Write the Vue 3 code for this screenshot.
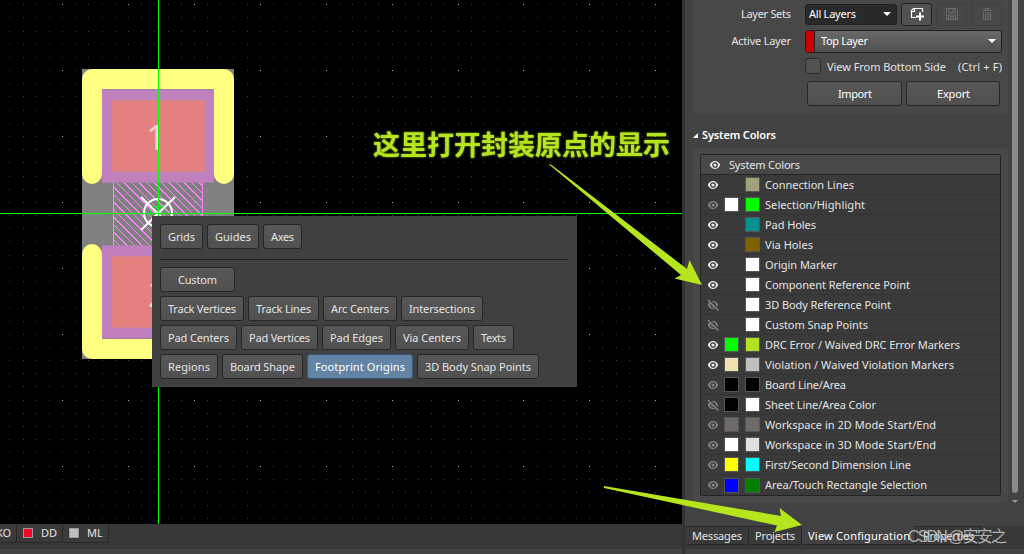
<script setup>
const STEP = 13.18
let dim = ''
let bright = ''
for (let i = -4; i < 48; i++) {
  for (let j = -5; j < 35; j++) {
    const x = Math.round(62.1 + i * STEP)
    const y = Math.round(70.1 + j * STEP)
    const d = `M${x} ${y}h1v1h-1z`
    if (i % 5 === 0 && j % 5 === 0) bright += d
    else dim += d
  }
}

const snapRows = [
  [['Custom', 75]],
  [['Track Vertices', 84], ['Track Lines', 71], ['Arc Centers', 74], ['Intersections', 82]],
  [['Pad Centers', 77], ['Pad Vertices', 77], ['Pad Edges', 69], ['Via Centers', 74], ['Texts', 41]],
  [['Regions', 58], ['Board Shape', 81], ['Footprint Origins', 106, true], ['3D Body Snap Points', 122]]
]
const scopes = [['Grids', 43], ['Guides', 52], ['Axes', 39]]

const rows = [
  ['on', '', '#a2a27a', 'Connection Lines', 89],
  ['dim', '#ffffff', '#00ff00', 'Selection/Highlight', 100],
  ['on', '', '#009090', 'Pad Holes', 51],
  ['on', '', '#806000', 'Via Holes', 48],
  ['on', '', '#ffffff', 'Origin Marker', 72],
  ['on', '', '#ffffff', 'Component Reference Point', 145],
  ['off', '', '#ffffff', '3D Body Reference Point', 126],
  ['off', '', '#ffffff', 'Custom Snap Points', 103],
  ['on', '#00ff00', '#b3e11f', 'DRC Error / Waived DRC Error Markers', 195],
  ['on', '#f0dfb0', '#c0c0c0', 'Violation / Waived Violation Markers', 189],
  ['dim', '#000000', '#000000', 'Board Line/Area', 81],
  ['off', '#000000', '#ffffff', 'Sheet Line/Area Color', 111],
  ['dim', '#6e6a6a', '#6e6a6a', 'Workspace in 2D Mode Start/End', 171],
  ['dim', '#ffffff', '#dfdfdf', 'Workspace in 3D Mode Start/End', 171],
  ['dim', '#ffff00', '#00ffff', 'First/Second Dimension Line', 146],
  ['dim', '#0000ff', '#008000', 'Area/Touch Rectangle Selection', 162]
]
const tabs = [['Messages', 63, 50], ['Projects', 53, 40], ['View Configuration', 114, 102], ['Properties', 65, 51]]
</script>

<template>
  <div class="app">
    <main class="left">
      <svg class="canvas" width="682" height="524">
        <defs>
          <clipPath id="body"><rect x="113" y="182" width="90" height="64" /></clipPath>
        </defs>
        <rect width="682" height="524" fill="#000" />
        <rect x="82" y="69" width="152" height="290" fill="#808080" />
        <path :d="dim" fill="#b0b0b0" fill-opacity=".36" shape-rendering="crispEdges" />
        <path :d="bright" fill="#b5b5b5" shape-rendering="crispEdges" />
        <g clip-path="url(#body)" stroke="#ff80ff" stroke-width="1" shape-rendering="crispEdges">
          <path v-for="n in 24" :key="n" :d="`M${26 + n * 7.5} 182l64 64`" />
        </g>
        <path d="M113.5 182V246M202.5 182V246" stroke="#ff80ff" />
        <g v-for="p in [0, 1]" :key="p" :transform="p ? 'translate(0 428) scale(1 -1)' : ''">
          <path d="M92 174V79H224V174" fill="none" stroke="#ffff80" stroke-width="20" stroke-linecap="round" stroke-linejoin="round" />
          <rect x="102" y="89.500" width="112" height="93" fill="#c07fbd" />
          <rect x="111.500" y="100.500" width="93" height="71" fill="#e58080" stroke="#cf868d" />
        </g>
        <text class="pin" x="156" y="149.500">1</text>
        <text class="pin" x="158" y="307">2</text>
        <g fill="none" stroke="#fff" stroke-width="2">
          <circle cx="158" cy="213" r="14" />
          <path d="M141 197l34 33M175 197l-34 33" />
        </g>
        <g fill="none" stroke="#0f0">
          <path d="M158.500 0V524M0 213.500H682M154 206.500h9" />
          <circle cx="158" cy="213" r="7.500" stroke-dasharray="5 2" />
        </g>
      </svg>
      <footer class="layers">
        <div class="layer first">KO</div>
        <div class="layer"><i class="red"></i>DD</div>
        <div class="layer"><i class="silver"></i>ML</div>
      </footer>
    </main>

    <aside class="side">
      <div class="scroll">
        <section class="card top">
          <div class="row r1">
            <label><svg width="80" height="18"><text x="30" y="13" textLength="50">Layer Sets</text></svg></label>
            <div class="combo dark"><svg width="60" height="18"><text x="0" y="13" textLength="47">All Layers</text></svg><b class="caret"></b></div>
            <button class="ico">
              <svg width="16" height="16" viewBox="0 0 16 16" fill="none" stroke="#fff"><path d="M7 11.500H2.500V4.500L4.500 2.500H13.500V6M2 5.500H5.500V2.500" stroke-width="1.200" /><path d="M11 6.500V14.500M7 10.500H15" stroke-width="2" /></svg>
            </button>
            <button class="ico off">
              <svg width="14" height="14" viewBox="0 0 14 14" fill="none" stroke="#6c6c6c"><path d="M1.500 1.500H11L12.500 3V12.500H1.500ZM4 1.500V5.500H10V1.500M8 2V4.500M3.500 12.500V8H10.500V12.500M5 9.500H9M5 11H9" /></svg>
            </button>
            <button class="ico off last">
              <svg width="12" height="14" viewBox="0 0 12 14" fill="none" stroke="#6c6c6c"><path d="M1.500 3.500H10.500M4.500 3V1.500H7.500V3" stroke-width="1.200" /><path d="M2.500 5V12.500H9.500V5M4.800 5V12M7.200 5V12" stroke-width="1.200" /></svg>
            </button>
          </div>
          <div class="row r2">
            <label><svg width="80" height="18"><text x="20.500" y="13" textLength="59.500">Active Layer</text></svg></label>
            <div class="combo wide"><i></i><svg width="60" height="18"><text x="0" y="13" textLength="47">Top Layer</text></svg><b class="caret"></b></div>
          </div>
          <div class="row r3">
            <i class="check"></i>
            <svg width="180" height="18"><text x="0" y="13" textLength="119">View From Bottom Side</text><text x="131" y="13" textLength="44">(Ctrl + F)</text></svg>
          </div>
          <div class="row r4">
            <button class="btn"><svg width="34" height="18"><text x="0" y="13" textLength="34">Import</text></svg></button>
            <button class="btn"><svg width="33" height="18"><text x="0" y="13" textLength="33">Export</text></svg></button>
          </div>
        </section>
        <h2><svg width="5" height="5"><path d="M5 0V5H0Z" fill="#fff" /></svg><svg width="80" height="18"><text x="0" y="13" textLength="74">System Colors</text></svg></h2>
        <section class="card colors">
          <div class="table">
            <div class="trow head">
              <svg class="eye" width="12" height="12"><path d="M.8 6C3 .6 9 .6 11.200 6C9 11.400 3 11.400 .8 6Z" class="shape" /><circle cx="6" cy="6" r="2.200" class="ring" /></svg>
              <svg class="label" width="80" height="18"><text x="0" y="13" textLength="71">System Colors</text></svg>
            </div>
            <div v-for="r in rows" :key="r[3]" class="trow">
              <svg class="eye" :class="r[0]" width="12" height="12">
                <path d="M.8 6C3 .6 9 .6 11.200 6C9 11.400 3 11.400 .8 6Z" class="shape" />
                <circle cx="6" cy="6" r="2.200" class="ring" />
                <g v-if="r[0] === 'off'"><path d="M2 .5L12 10.500" stroke="#3a3a3a" stroke-width="1.600" /><path d="M1 1L11.500 11.500" stroke="#858585" stroke-width="1.300" /></g>
              </svg>
              <i class="sw" :class="{ none: !r[1] }" :style="{ background: r[1] }"></i>
              <i class="sw two" :style="{ background: r[2] }"></i>
              <svg class="label" width="220" height="18"><text x="0" y="13" :textLength="r[4]">{{ r[3] }}</text></svg>
            </div>
          </div>
        </section>
      </div>
      <div class="bar"><i></i><b></b></div>
      <nav class="tabs">
        <div v-for="t in tabs" :key="t[0]" class="tab" :class="{ active: t[1] === 114 }" :style="{ width: t[1] + 'px' }">
          <svg :width="t[2]" height="18"><text x="0" y="13" :textLength="t[2]">{{ t[0] }}</text></svg>
        </div>
      </nav>
    </aside>

    <div class="popup">
      <div class="line">
        <button v-for="b in scopes" :key="b[0]" class="btn" :style="{ width: b[1] + 'px' }"><svg :width="b[1] - 16" height="18"><text x="0" y="13" :textLength="b[1] - 16">{{ b[0] }}</text></svg></button>
      </div>
      <hr />
      <div v-for="(row, k) in snapRows" :key="k" class="line">
        <button v-for="b in row" :key="b[0]" class="btn" :class="{ sel: b[2] }" :style="{ width: b[1] + 'px' }"><svg :width="b[0] === 'Custom' ? 39 : b[1] - 16" height="18"><text x="0" y="13" :textLength="b[0] === 'Custom' ? 39 : b[1] - 16">{{ b[0] }}</text></svg></button>
      </div>
    </div>

    <svg class="notes" width="1024" height="554">
      <text class="cn" x="373" y="154.500" textLength="297">这里打开封装原点的显示</text>
      <g fill="#b5e61d">
        <path d="M548.500 164L551 164.500L687 269L689.500 260L702 285L674.500 278.500L681 275Z" />
        <path d="M604 486L781 516L779.500 508L802 525L774.500 532L777 525.500L604 488Z" />
      </g>
      <text class="mark" x="908" y="542" textLength="99">CSDN @安安之</text>
    </svg>
  </div>
</template>

<style>
body { background: #383838; overflow: hidden; }
</style>

<style scoped>
.app { position: relative; display: flex; width: 1024px; height: 554px; overflow: hidden; font: 11px/18px "Noto Sans", "Open Sans", sans-serif; color: #e4e4e4; background: #383838; }
.app * { box-sizing: border-box; }
svg { display: block; flex: none; overflow: visible; }
svg text { fill: #e4e4e4; }
.left { width: 682px; height: 554px; border-bottom: 5px solid #434343; }
.canvas { overflow: hidden; }
.canvas .pin { font-size: 34px; font-weight: 400; text-anchor: middle; fill: #f9cfcf; }
.layers { display: flex; height: 19px; }
.layer { display: flex; align-items: center; width: 46px; height: 19px; padding-left: 6px; border: 1px solid #272727; border-top: 0; border-left: 0; border-radius: 0 0 3px 3px; background: #3a3a3a; font-size: 11px; }
.layer.first { width: 17px; padding: 0; text-indent: -4px; }
.layer i { width: 10px; height: 10px; margin-right: 8px; border: 1px solid #999; }
.red { background: #ff0028; }
.silver { background: #c0c0c0; }

.side { width: 342px; height: 554px; display: grid; grid-template: 526px 28px / 327px 12px; background: #424242; border-left: 3px solid #333; }
.scroll { padding-left: 8px; height: 526px; }
.card { width: 315px; background: #484848; }
.top { height: 114px; border-radius: 0 0 4px 4px; padding-top: 2px; }
.row { display: flex; align-items: center; }
.r1 { height: 24px; }
.r2 { height: 24px; margin-top: 3px; }
.row label { width: 98px; margin-right: 14px; padding-left: 18px; }
.combo { display: flex; align-items: center; border: 1px solid #1f1f1f; border-radius: 3px; }
.combo svg text, .btn svg text { fill: #fff; }
.dark { width: 92px; height: 21px; padding: 0 5px 0 3px; background: #292929; justify-content: space-between; }
.wide { width: 197px; height: 23px; background: linear-gradient(#686868, #505050); padding-right: 5px; }
.wide i { width: 9px; height: 21px; background: #c00; border-right: 1px solid #222; margin-right: 6px; }
.wide .caret { margin-left: auto; }
.caret { width: 0; height: 0; border: 4px solid transparent; border-top-color: #fff; border-bottom: 0; }
.ico { display: grid; place-items: center; width: 31px; height: 23px; padding: 0; margin-left: 4px; background: #525252; border: 1px solid #222; border-radius: 3px; }
.ico.off { background: #484848; border-color: #404040; }
.r3 { height: 16px; margin: 5px 0 0 112px; gap: 6px; }
.r3 svg:last-child { margin-top: 2px; }
.check { width: 16px; height: 16px; background: #525252; border: 1px solid #2c2c2c; border-radius: 3px; }
.r4 { margin: 7px 0 0 114px; gap: 4px; }
.r4 .btn { width: 95px; }
.r4 .btn + .btn { width: 94px; }
.btn { display: flex; align-items: center; justify-content: center; height: 25px; padding: 0; border: 1px solid #262626; border-radius: 3px; background: linear-gradient(#575757, #505050); font: inherit; }
h2 { display: flex; align-items: center; gap: 4px; height: 18px; margin: 12px 0 4px; font-size: 11px; font-weight: 600; }
h2 text { fill: #fff; }
.colors { height: 355px; padding: 6px 0 0 7px; border-radius: 4px; }
.table { width: 301px; height: 342px; border: 1px solid #242424; border-radius: 2px; background: #3a3a3a; }
.trow { display: flex; align-items: center; height: 20px; padding-left: 6px; border-bottom: 1px solid #333; }
.trow:last-child { border-bottom: 0; }
.head { padding-left: 8px; background: #484848; border-bottom-color: #242424; }
.eye .shape { fill: #eee; }
.eye .ring { fill: #eee; stroke: #3a3a3a; stroke-width: 1.3; }
.dim .shape, .dim .ring, .off .shape, .off .ring { fill: #858585; }
.head .label { margin-left: 8px; }
.sw { width: 15px; height: 15px; margin-left: 5px; border: 1px solid #555; }
.two { margin: 0 5px 0 6px; }
.none { visibility: hidden; }
.bar { height: 503px; }
.bar i { display: block; width: 6px; height: 493px; background: #8a8a8a; border-radius: 0 0 3px 3px; }
.bar b { display: block; margin-top: 7px; border: 3px solid transparent; border-top-color: #999; border-bottom: 0; width: 0; }
.tabs { grid-column: 1 / 3; display: flex; height: 23px; width: 339px; padding-left: 1px; background: #383838; box-shadow: 0 5px #424242; }
.tab { display: flex; align-items: center; justify-content: center; height: 19px; border: 1px solid #272727; border-left: 0; border-radius: 0 0 3px 3px; background: #3a3a3a; }
.active { background: #424242; border-top-color: #424242; }
.active text { fill: #fff; }

.popup { position: absolute; left: 152px; top: 216px; width: 425px; height: 171px; padding: 8px; background: #404040; }
.line { display: flex; gap: 4px; margin-bottom: 4px; }
.popup .btn text { fill: #e4e4e4; }
.popup .sel { background: #6384a5; border-color: #335475; }
.popup .sel text { fill: #fff; }
hr { height: 1px; margin: 10px 0 7px; border: 0; background: #252525; }
.notes { position: absolute; left: 0; top: 0; pointer-events: none; }
.notes .cn { font: 700 27px "Noto Sans CJK SC", sans-serif; fill: #b5e61d; filter: drop-shadow(0 0 1px #89ad20); }
.notes .mark { font: 16px "Liberation Sans", "Noto Sans CJK SC", sans-serif; fill: #c8c8c8; fill-opacity: .85; }
</style>
